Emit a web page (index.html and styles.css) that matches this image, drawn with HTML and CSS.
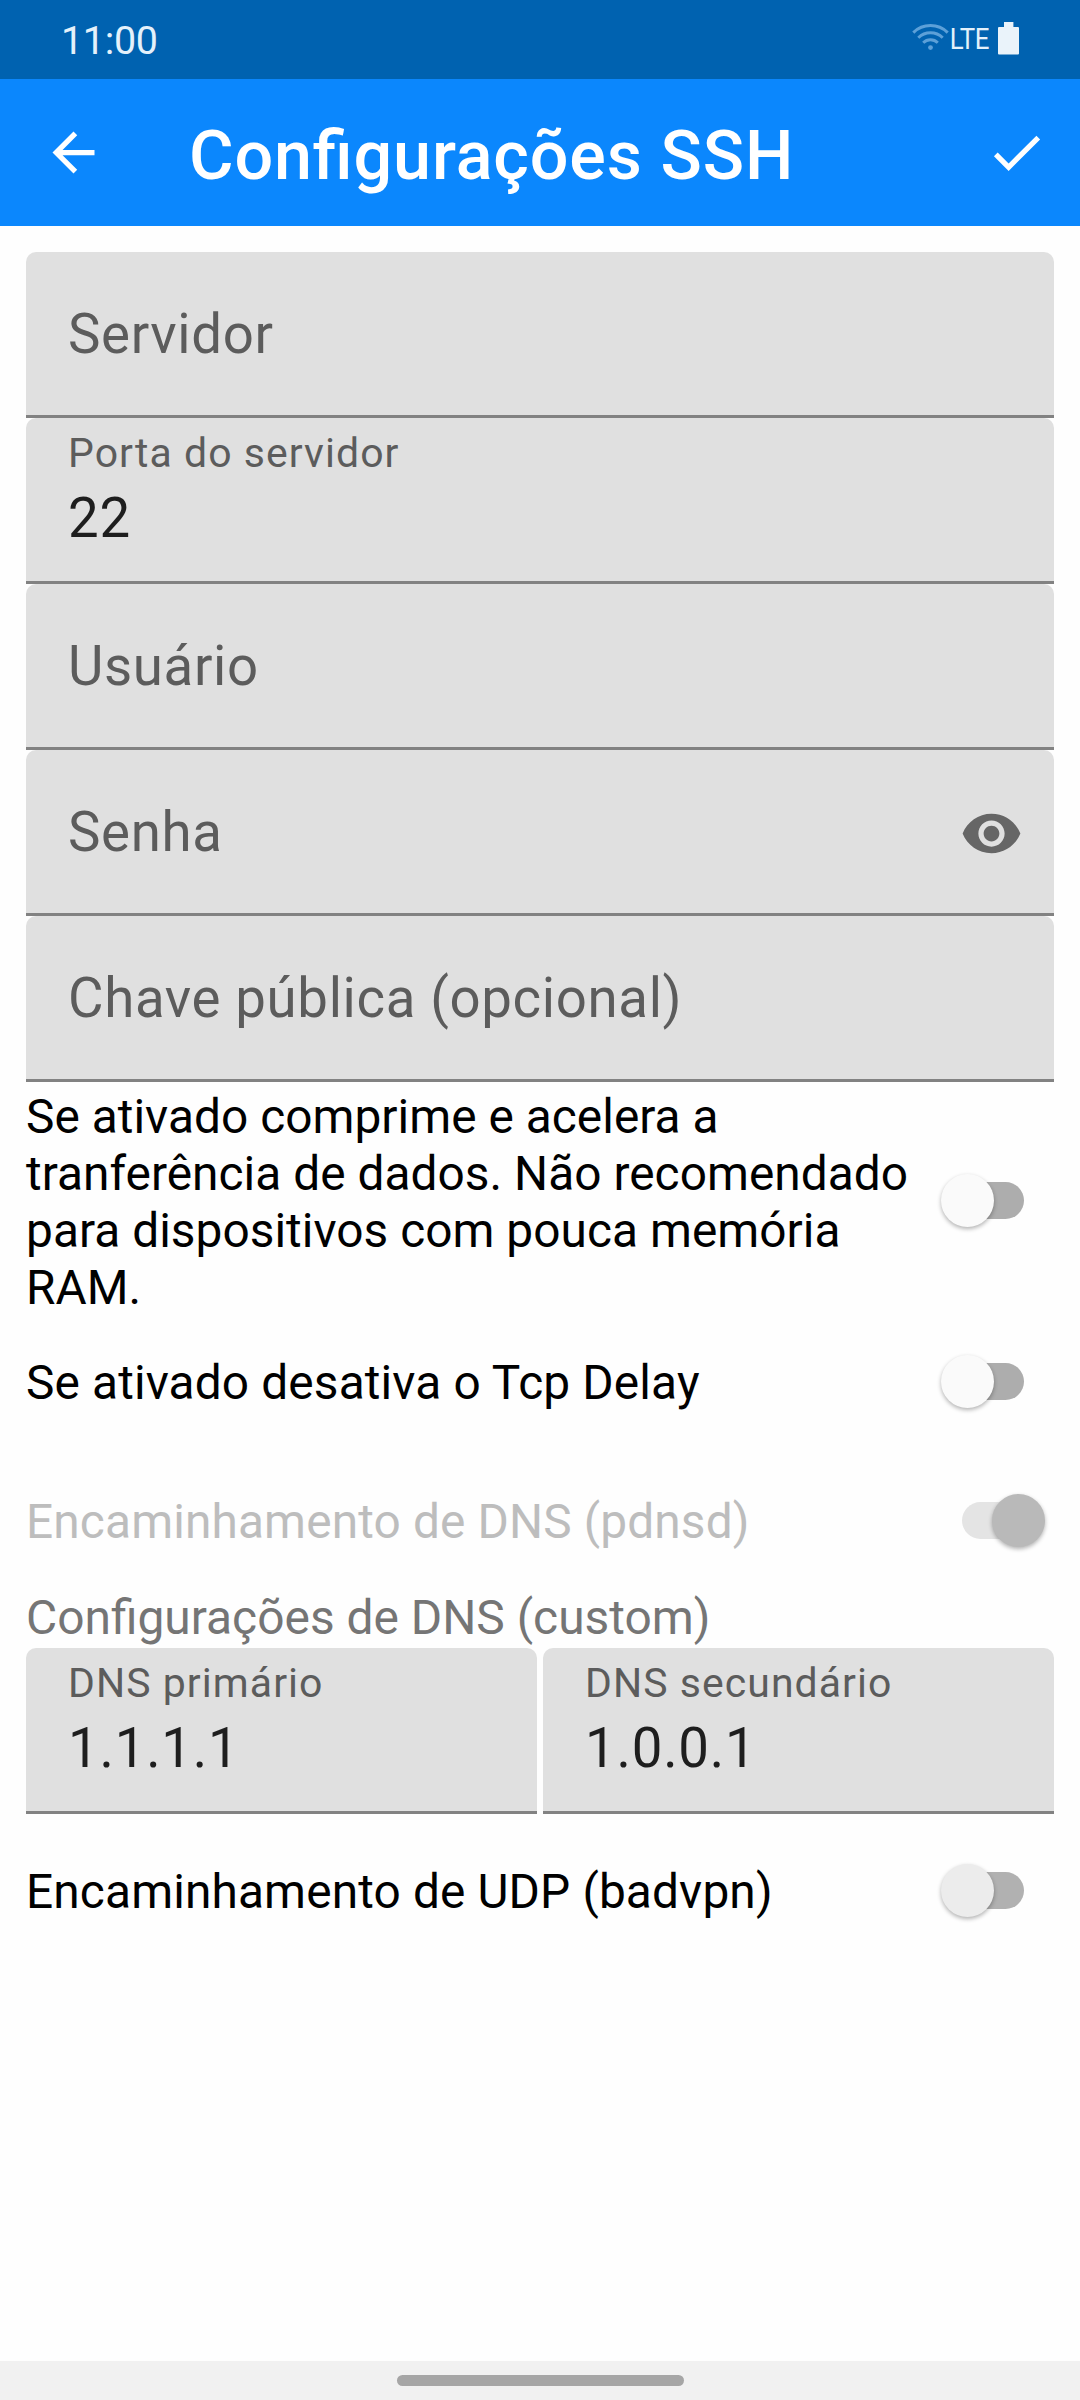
FILE: index.html
```html
<!DOCTYPE html>
<html lang="pt-BR">
<head>
    <meta charset="UTF-8">
    <meta name="viewport" content="width=device-width, initial-scale=1.0">
    <title>Configurações SSH</title>
    <link rel="stylesheet" href="styles.css">
</head>
<body>
<div class="status-bar">
    <span class="clock">11:00</span>
    <div class="status-icons">
        <svg class="wifi" width="37" height="28" viewBox="0 0 37 28" fill="none" stroke="#5ca0d8" stroke-width="3">
            <path d="M1.3 9.6a24.6 24.6 0 0 1 34.4 0"/>
            <path d="M6.3 14.8a17.4 17.4 0 0 1 24.4 0"/>
            <path d="M11.2 19.8a10.4 10.4 0 0 1 14.6 0"/>
            <circle cx="18.5" cy="24.6" r="2.4" fill="#5ca0d8" stroke="none"/>
        </svg>
        <span class="network">LTE</span>
        <svg class="battery" width="21" height="33" viewBox="0 0 21 33" fill="#eaf3fa">
            <path d="M6 0h9.400v5H20a1 1 0 0 1 1 1v25.500a1 1 0 0 1-1 1H1a1 1 0 0 1-1-1V6a1 1 0 0 1 1-1h5z"/>
        </svg>
    </div>
</div>

<header class="app-bar">
    <svg class="icon" viewBox="0 0 24 24"><path d="M20 11H7.830l5.590-5.590L12 4l-8 8 8 8 1.410-1.410L7.830 13H20v-2z"/></svg>
    <h1>Configurações SSH</h1>
    <svg class="icon" viewBox="0 0 24 24"><path d="M9 16.170L4.830 12l-1.420 1.410L9 19 21 7l-1.410-1.410z"/></svg>
</header>

<main class="content">
    <div class="field">
        <span class="hint">Servidor</span>
    </div>
    <div class="field">
        <span class="label">Porta do servidor</span>
        <span class="value">22</span>
    </div>
    <div class="field">
        <span class="hint">Usuário</span>
    </div>
    <div class="field field-icon">
        <span class="hint">Senha</span>
        <svg class="icon eye" viewBox="0 0 24 24"><path d="M12 4.500C7 4.500 2.730 7.610 1 12c1.730 4.390 6 7.500 11 7.500s9.270-3.110 11-7.500c-1.730-4.390-6-7.500-11-7.500zM12 17c-2.760 0-5-2.240-5-5s2.240-5 5-5 5 2.240 5 5-2.240 5-5 5zm0-8c-1.660 0-3 1.340-3 3s1.340 3 3 3 3-1.340 3-3-1.340-3-3-3z"/></svg>
    </div>
    <div class="field">
        <span class="hint">Chave pública (opcional)</span>
    </div>

    <div class="option option-compress">
        <p>Se ativado comprime e acelera a tranferência de dados. Não recomendado para dispositivos com pouca memória RAM.</p>
        <div class="switch"><span class="thumb"></span></div>
    </div>
    <div class="option option-delay">
        <p>Se ativado desativa o Tcp Delay</p>
        <div class="switch"><span class="thumb"></span></div>
    </div>
    <div class="option option-dns disabled">
        <p>Encaminhamento de DNS (pdnsd)</p>
        <div class="switch on"><span class="thumb"></span></div>
    </div>

    <h2>Configurações de DNS (custom)</h2>
    <div class="dns-row">
        <div class="field">
            <span class="label">DNS primário</span>
            <span class="value">1.1.1.1</span>
        </div>
        <div class="field">
            <span class="label">DNS secundário</span>
            <span class="value">1.0.0.1</span>
        </div>
    </div>

    <div class="option option-udp">
        <p>Encaminhamento de UDP (badvpn)</p>
        <div class="switch"><span class="thumb"></span></div>
    </div>
</main>

<footer class="nav-bar">
    <div class="handle"></div>
</footer>
</body>
</html>
```

FILE: styles.css
```css
* {
    margin: 0;
    padding: 0;
    box-sizing: border-box;
}

body {
    display: flex;
    flex-direction: column;
    height: 2400px;
    background-color: #fefefe;
    font-family: Roboto, 'Liberation Sans', sans-serif;
}

/* Status bar */
.status-bar {
    display: flex;
    justify-content: space-between;
    height: 79px;
    padding: 0 61px;
    background-color: #0062b0;
    color: #e4f1fb;
}

.clock {
    font-size: 39.4px;
    line-height: 81px;
    letter-spacing: -0.3px;
}

.status-icons {
    display: flex;
    align-items: flex-start;
}

.wifi {
    margin-top: 23px;
}

.network {
    width: 49px;
    padding-left: 1px;
    font-size: 30px;
    line-height: 78px;
    letter-spacing: -0.5px;
    transform: scaleX(0.86);
    transform-origin: left;
}

.battery {
    margin-top: 22px;
}

/* App bar */
.app-bar {
    display: flex;
    align-items: center;
    height: 147px;
    padding: 0 32px 0 42px;
    background-color: #0b87fd;
}

.app-bar h1 {
    flex: 1;
    padding: 6px 0 0 84px;
    color: #fff;
    font-size: 68.25px;
    font-weight: 500;
    line-height: 80px;
    letter-spacing: 0.85px;
    font-feature-settings: "liga" 1;
}

.icon {
    width: 63px;
    height: 63px;
    fill: #fff;
}

/* Form */
.content {
    flex: 1;
    padding: 26px 26px 0;
}

.field {
    display: flex;
    flex-direction: column;
    height: 166px;
    padding: 0 42px;
    background-color: #e0e0e0;
    border-bottom: 3px solid #828282;
    border-radius: 10px 10px 0 0;
}

.hint {
    color: #5c5c5c;
    font-size: 54.6px;
    line-height: 64px;
    letter-spacing: 0.64px;
    padding-top: 50px;
}

.field-icon {
    flex-direction: row;
    justify-content: space-between;
    padding-right: 31px;
}

.eye {
    margin-top: 52px;
    fill: #666;
}

.label {
    color: #5c5c5c;
    font-size: 40.95px;
    line-height: 48px;
    letter-spacing: 1.07px;
    padding-top: 11px;
}

.value {
    color: #1e1e1e;
    font-size: 54.6px;
    line-height: 64px;
    letter-spacing: 0.8px;
    padding-top: 9px;
}

.option {
    display: flex;
    align-items: center;
    justify-content: space-between;
}

.option p {
    width: 890px;
    padding-top: 3px;
    color: #000;
    font-size: 47.8px;
    line-height: 57px;
    letter-spacing: 0.14px;
}

.option-compress {
    height: 237px;
}

.option-compress p {
    padding-top: 5px;
    letter-spacing: 0.04px;
}

.option-delay {
    height: 125px;
}

.option-dns {
    height: 137px;
    margin-top: 8px;
}

.option-udp {
    height: 153px;
}

.disabled p {
    color: #bdbdbd;
}

h2 {
    height: 59px;
    padding-top: 1px;
    color: #757575;
    font-size: 47.9px;
    font-weight: 400;
    line-height: 57px;
}

.dns-row {
    display: flex;
    gap: 6px;
}

.dns-row .field {
    flex: 1;
}

/* Switch */
.switch {
    display: flex;
    align-items: center;
    width: 122px;
    height: 71px;
    padding: 0 9px;
    position: relative;
}

.switch::before {
    content: "";
    position: absolute;
    left: 30px;
    top: 17px;
    width: 62px;
    height: 37px;
    border-radius: 19px;
    background-color: #adadad;
}

.thumb {
    position: relative;
    width: 53px;
    height: 53px;
    border-radius: 50%;
    background-color: #fafafa;
    box-shadow: 0 2px 4px rgba(0, 0, 0, 0.3);
}

.switch.on {
    justify-content: flex-end;
}

.switch.on::before {
    background-color: #e4e4e4;
}

.switch.on .thumb {
    background-color: #b9b9b9;
}

.option-udp .switch::before {
    background-color: #b1b1b1;
}

.option-udp .thumb {
    background-color: #ececec;
}

/* Navigation bar */
.nav-bar {
    display: flex;
    justify-content: center;
    height: 39px;
    padding-top: 14px;
    background-color: #f1f1f1;
}

.handle {
    width: 287px;
    height: 10.5px;
    border-radius: 6px;
    background-color: #a6a6a6;
}
```
